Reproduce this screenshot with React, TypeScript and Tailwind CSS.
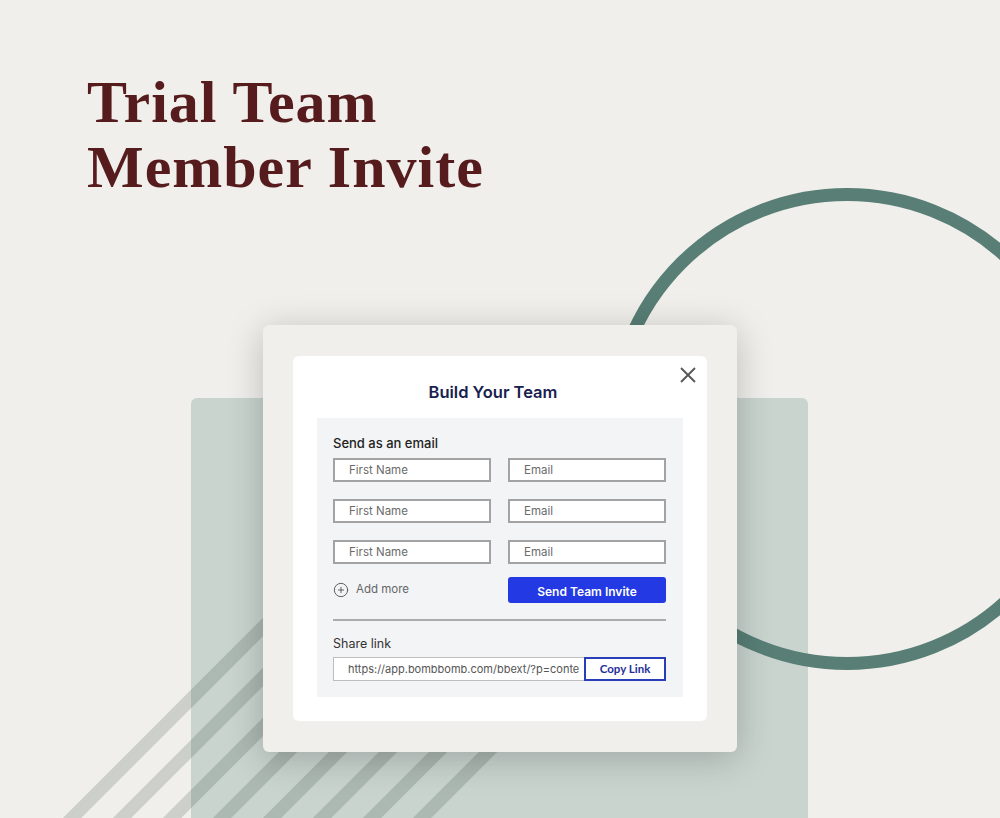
import { CirclePlus } from 'lucide-react'

const ROWS = [0, 1, 2]

// bottom x of each diagonal stripe at y = 818
const STRIPES = [72, 122, 172, 222, 272, 322, 372, 422]

function Field({ placeholder }: { placeholder: string }) {
  return (
    <div className="h-6 border-2 border-[#a3a3a3] bg-white pl-[14px] pt-px flex items-center text-[11.5px] text-[#6b6b6b]">
      {placeholder}
    </div>
  )
}

export default function App() {
  return (
    <div className="relative w-[1000px] h-[818px] overflow-hidden bg-[#f0efeb] font-['Inter',sans-serif]">
      {/* backdrop shapes */}
      <div className="absolute left-[191px] top-[398px] w-[617px] h-[440px] rounded-md bg-[#c9d4cf]" />
      <div className="absolute left-[606px] top-[188px] w-[482px] h-[482px] rounded-full border-[13px] border-[#587e76]" />
      <svg className="absolute inset-0 mix-blend-multiply" width="1000" height="818" viewBox="0 0 1000 818">
        {STRIPES.map(x => (
          <line key={x} x1={x - 20} y1={838} x2={x + 300} y2={518} stroke="#dadedb" strokeWidth={13} />
        ))}
      </svg>

      <div className="relative flex flex-col">
        <h1 className="pt-[70px] pl-[87px] font-['Liberation_Serif',serif] font-bold text-[60px] leading-[65px] tracking-[1px] text-[#561b1d]">
          Trial Team
          <br />
          Member Invite
        </h1>

        <div className="mt-[125px] ml-[263px] w-[474px] rounded-md bg-[#f0efeb] px-[30px] pt-[31px] pb-[31px] shadow-[0_6px_36px_rgba(0,0,0,0.22)]">
          <div className="relative rounded-md bg-white px-6 pt-[26px] pb-6">
            <button className="absolute right-[11px] top-[11px] w-4 h-4 text-[#555]" aria-label="Close">
              <svg viewBox="0 0 16 16" className="w-4 h-4" fill="none" stroke="currentColor" strokeWidth={1.8}>
                <path d="M1 1l14 14M15 1L1 15" />
              </svg>
            </button>
            <h2 className="pr-[14px] text-center text-[16.5px] leading-5 font-semibold text-[#18204f]">Build Your Team</h2>

            <div className="mt-4 bg-[#f3f4f6] pl-4 pr-[17px] pt-[17px] pb-4">
              <p className="text-[13px] leading-4 font-medium text-[#222]">Send as an email</p>
              <div className="mt-[7px] grid grid-cols-2 gap-x-[17px] gap-y-[17px]">
                {ROWS.map(i => (
                  <div key={i} className="contents">
                    <Field placeholder="First Name" />
                    <Field placeholder="Email" />
                  </div>
                ))}
              </div>

              <div className="mt-[13px] grid grid-cols-2 gap-x-[17px] items-center">
                <div className="flex items-center gap-[7px] text-[11.5px] text-[#666]">
                  <CirclePlus size={16} strokeWidth={1.4} className="text-[#555]" />
                  Add more
                </div>
                <button className="h-[26px] pt-[3px] rounded-[3px] bg-[#2239e3] text-white text-[12px] font-semibold">
                  Send Team Invite
                </button>
              </div>

              <div className="mt-4 h-[2px] bg-[#ababab]" />

              <p className="mt-[15px] text-[12.5px] leading-4 text-[#333]">Share link</p>
              <div className="mt-[5px] flex h-6">
                <div className="flex-1 min-w-0 overflow-hidden whitespace-nowrap border-[1.5px] border-r-0 border-[#bdbdbd] bg-white pl-[14px] flex items-center text-[11px] text-[#555]">
                  https://app.bombbomb.com/bbext/?p=conte
                </div>
                <button className="w-[82px] border-2 border-[#2a3db8] bg-white font-['Lato',sans-serif] font-bold text-[11.5px] text-[#1f2e9a]">
                  Copy Link
                </button>
              </div>
            </div>
          </div>
        </div>
      </div>
    </div>
  )
}
